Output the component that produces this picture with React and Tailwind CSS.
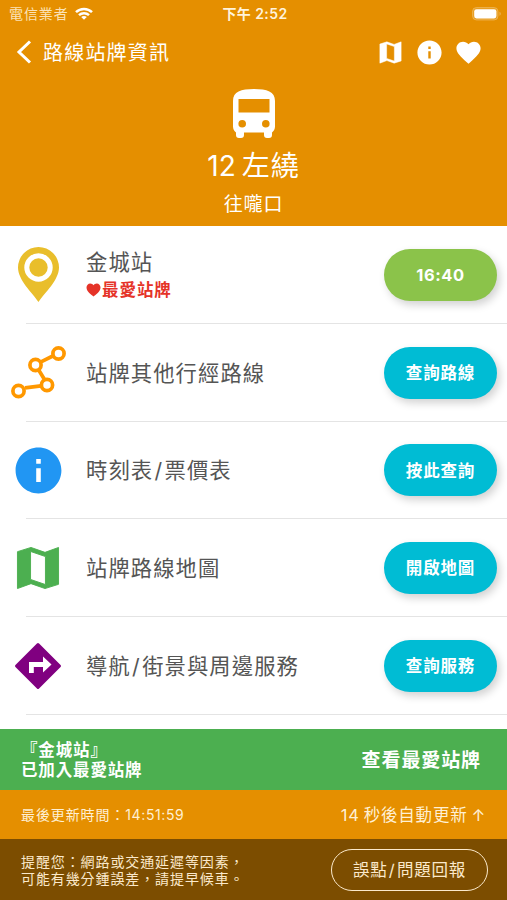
import React from "react";
import { MdInfo, MdFavorite } from "react-icons/md";

function WifiIcon() {
  return (
    <svg width="18" height="13" viewBox="0 0 18 13" fill="none" stroke="#fff" strokeWidth="2.5">
      <path d="M1 5.1C5.4.8 12.6.8 17 5.1" />
      <path d="M4 8.2c2.8-2.6 7.200-2.600 10 0" />
      <path d="M9 12.8 6.200 10.100c1.600-1.400 4-1.400 5.600 0z" fill="#fff" stroke="none" />
    </svg>
  );
}

function BatteryIcon() {
  return (
    <svg width="30" height="14" viewBox="0 0 30 14">
      <rect x="0.500" y="0.500" width="25.500" height="12.500" rx="4" fill="#f4cf8e" fillOpacity=".25" stroke="#f4cf8e" strokeOpacity=".45" />
      <rect x="2.200" y="2.200" width="22.200" height="9.200" rx="2.300" fill="#fff" />
      <path d="M27.500 4.700c1.700.6 1.700 3.500 0 4.100z" fill="#f4cf8e" fillOpacity=".6" />
    </svg>
  );
}

function MapIcon({ size, color = "currentColor" }) {
  return (
    <svg width={size} height={size} viewBox="0 0 24 24" fill={color} stroke={color} strokeWidth=".4" strokeLinejoin="round">
      <path fillRule="evenodd" d="M3.200 5 9 3.200l6 2.100 5.800-2.100v15.800L15 20.800l-6-2.100-5.800 2.100zM8.800 4.900v12l6.400 2.200v-12z" />
    </svg>
  );
}

function DirectionsIcon() {
  return (
    <svg width="48" height="48" viewBox="0 0 48 48">
      <path d="M24 2.500 45.500 24 24 45.500 2.500 24z" fill="#800080" stroke="#800080" strokeWidth="3" strokeLinejoin="round" />
      <path d="M15 31V20h14v-5.500l8.500 8-8.500 8V25h-9.200v6z" fill="#fff" />
    </svg>
  );
}

function BusIcon() {
  return (
    <svg width="42" height="50" viewBox="0 0 42 50" fill="#fff">
      <path
        fillRule="evenodd"
        d="M0 12C0 2.500 8 0 21 0s21 2.500 21 12v25.500c0 2.500-1.200 4.500-3 6V46a3 3 0 0 1-3 3h-2a3 3 0 0 1-3-3v-2.500H11V46a3 3 0 0 1-3 3H6a3 3 0 0 1-3-3v-2.500c-1.800-1.500-3-3.500-3-6zM5.500 10v13.500h31V10zM9.200 31a3.800 3.800 0 1 0 0 7.600 3.800 3.800 0 0 0 0-7.600zm23.600 0a3.800 3.800 0 1 0 0 7.600 3.800 3.800 0 0 0 0-7.600z"
      />
    </svg>
  );
}

function PinIcon() {
  return (
    <svg width="42" height="55" viewBox="0 0 42 55" className="ml-px">
      <path d="M20.500 55C14 45.500 0 33 0 20.500a20.500 20.500 0 0 1 41 0C41 33 27 45.500 20.500 55z" fill="#e9be2b" />
      <circle cx="20.500" cy="20.500" r="11.700" fill="none" stroke="#fff" strokeWidth="5" />
    </svg>
  );
}

function RouteIcon() {
  return (
    <svg width="56" height="54" viewBox="0 0 56 54" fill="none" stroke="#ff9800" strokeWidth="3.700" className="ml-px">
      <path d="M41.800 10 30 15.800M28 24.500l5.500 9M30 39.800l-16 2" />
      <circle cx="47.500" cy="7.500" r="5.600" />
      <circle cx="24.500" cy="19" r="5.600" />
      <circle cx="36" cy="39" r="5.600" />
      <circle cx="7.500" cy="45" r="5.600" />
    </svg>
  );
}

function SmallHeart() {
  return (
    <svg width="15" height="14" viewBox="0 0 15 14" fill="#e53328">
      <path d="M7.500 13.500C5.500 11.800.5 9 .5 4.600.500 2.200 2.200.5 4.200.5c1.400 0 2.600.7 3.300 1.800C8.200 1.200 9.400.5 10.800.5c2 0 3.700 1.700 3.700 4.100 0 4.400-5 7.200-7 8.900z" />
    </svg>
  );
}

const rows = [
  { icon: <PinIcon />, title: "金城站", favorite: true, action: "16:40" },
  { icon: <RouteIcon />, title: "站牌其他行經路線", action: "查詢路線" },
  { icon: <MdInfo size={55} color="#2196f3" />, title: "時刻表/票價表", action: "按此查詢" },
  { icon: <MapIcon size={56} color="#4caf50" />, title: "站牌路線地圖", action: "開啟地圖" },
  { icon: <DirectionsIcon />, title: "導航/街景與周邊服務", action: "查詢服務" },
];

function SlashText({ text }) {
  const [before, after] = text.split("/");
  if (after === undefined) return text;
  return (
    <>
      {before}
      <span className="mx-[1.300px]">/</span>
      {after}
    </>
  );
}

function Row({ icon, title, favorite, action }) {
  return (
    <div className="relative flex h-[97.750px] items-center pr-[10px]">
      <div className="flex w-[76.500px] shrink-0 items-center justify-center">{icon}</div>
      <div className="ml-[9.500px] flex flex-1 flex-col whitespace-nowrap">
        <div className="text-[21.300px] leading-[28px] tracking-[1.100px] text-[#555]">
          <SlashText text={title} />
        </div>
        {favorite && (
          <div className="flex h-[25px] items-center gap-px pt-[3px] text-[16.500px] font-bold tracking-[0.950px] text-[#e53328]">
            <SmallHeart />
            <span>最愛站牌</span>
          </div>
        )}
      </div>
      <button
        className={
          "flex h-[52px] w-[113px] shrink-0 items-center justify-center rounded-full pt-px text-[16.500px] font-bold text-white shadow-[3px_4px_8px_rgba(0,0,0,0.18)] " +
          (favorite ? "bg-[#8bc34a] tracking-[0.600px]" : "bg-[#00bcd4] tracking-[0.850px]")
        }
      >
        {action}
      </button>
      <div className="absolute bottom-0 left-[26px] right-0 h-px bg-[#e4e4e4]" />
    </div>
  );
}

export default function App() {
  return (
    <div className="flex h-[900px] w-[507px] flex-col overflow-hidden bg-white font-[Inter,'Noto_Sans_CJK_TC',sans-serif]">
      <header className="h-[225.500px] shrink-0 bg-[#e58f00] text-white">
        <div className="grid h-[27px] grid-cols-3 items-center pl-[9px] pr-[5px]">
          <div className="flex items-center gap-[6px] text-[14px] tracking-[0.900px] text-[#fbe3b8]">
            <span>電信業者</span>
            <WifiIcon />
          </div>
          <div className="whitespace-nowrap pr-px text-center text-[14px] font-semibold tracking-[0.400px] text-[#fff3dc]">下午 2:52</div>
          <div className="flex justify-end">
            <BatteryIcon />
          </div>
        </div>
        <div className="flex h-[50px] items-center pl-[16px] pr-[24.500px]">
          <svg width="16" height="24" viewBox="0 0 16 24" fill="none" stroke="#fff" strokeWidth="3">
            <path d="M14 1.500 3 12l11 10.500" />
          </svg>
          <h1 className="ml-[11px] flex-1 pt-[2px] text-[20px] leading-[30px] tracking-[1.200px]">路線站牌資訊</h1>
          <div className="flex items-center gap-[10px]">
            <MapIcon size={29} />
            <MdInfo size={29} />
            <MdFavorite size={29} />
          </div>
        </div>
        <div className="flex flex-col items-center pt-[12px]">
          <BusIcon />
          <div className="mt-[7px] flex items-baseline gap-[6px] text-[28px] leading-[40px]">
            <span>12</span>
            <span className="tracking-[1px]">左繞</span>
          </div>
          <div className="mt-[5px] text-[19px] leading-[28px] tracking-[0.800px]">往嚨口</div>
        </div>
      </header>

      <main className="h-[503.500px] shrink-0 overflow-hidden pt-[0.600px]">
        {rows.map((row) => (
          <Row key={row.title} {...row} />
        ))}
      </main>

      <section className="flex h-[61px] shrink-0 items-center justify-between bg-[#4caf50] pl-[21px] pr-[26px] font-bold text-white">
        <div className="pt-px text-[16.500px] leading-[20.500px] tracking-[0.850px]">
          <div>『金城站』</div>
          <div>已加入最愛站牌</div>
        </div>
        <div className="pt-[3px] text-[19px] tracking-[0.900px]">查看最愛站牌</div>
      </section>

      <section className="flex h-[49px] shrink-0 items-center justify-between bg-[#e58f00] pl-[21px] pr-[21px] text-[#fff0d4]">
        <div className="text-[14px] tracking-[0.900px]">
          最後更新時間：<span className="tracking-[0.600px]">14:51:59</span>
        </div>
        <div className="pt-px text-[16.500px] tracking-[0.800px] [word-spacing:-1.500px]">14 秒後自動更新 ↑</div>
      </section>

      <footer className="flex h-[61px] shrink-0 items-center justify-between bg-[#7c4d00] pl-[21px] pr-[19px] text-[#fbe9cb]">
        <div className="whitespace-nowrap text-[14px] leading-[17px] tracking-[0.900px]">
          <div>提醒您：網路或交通延遲等因素，</div>
          <div>可能有幾分鍾誤差，請提早候車。</div>
        </div>
        <button className="flex h-[42px] w-[157px] items-center justify-center rounded-full border-[1.500px] border-[#fbe9cb] pt-px text-[16.500px] tracking-[0.800px]">
          <span>
            <SlashText text="誤點/問題回報" />
          </span>
        </button>
      </footer>
    </div>
  );
}
